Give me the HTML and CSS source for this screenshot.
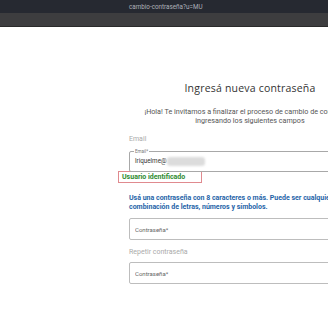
FILE: index.html
```html
<!DOCTYPE html>
<html lang="es">
<head>
    <meta charset="UTF-8">
    <meta name="viewport" content="width=device-width, initial-scale=1.0">
    <title>Cambio de contraseña</title>
    <link rel="stylesheet" href="styles.css">
</head>
<body>

    <!-- Browser chrome -->
    <div class="url-bar">cambio-contraseña?u=MU</div>
    <div class="tab-bar"></div>

    <div class="page">
        <h2 class="title">Ingresá nueva contraseña</h2>
        <p class="intro">¡Hola! Te invitamos a finalizar el proceso de cambio de contraseña<br>ingresando los siguientes campos</p>

        <label class="field-label first">Email</label>
        <div class="email-box">
            <span class="float-label">Email*</span>
            <span class="email-text">lriquelme@</span><span class="blur"></span>
        </div>
        <div class="status">Usuario identificado</div>

        <p class="hint">Usá una contraseña con 8 caracteres o más. Puede ser cualquier<br>combinación de letras, números y símbolos.</p>

        <input type="password" class="pass" placeholder="Contraseña*">

        <label class="field-label">Repetir contraseña</label>
        <input type="password" class="pass second" placeholder="Contraseña*">
    </div>

</body>
</html>
```

FILE: styles.css
```css
/* General */
html, body {
    margin: 0;
    overflow: hidden;
}

body {
    font-family: Roboto, 'Liberation Sans', sans-serif;
    background: white;
    color: #444;
}

/* Browser chrome */
.url-bar {
    height: 13px;
    background: #262931;
    color: #aeb1b8;
    font-size: 6.3px;
    line-height: 14px;
    padding-left: 129px;
}

.tab-bar {
    height: 13px;
    background: #3d3d3f;
    border-bottom: 1px solid #2a2a2a;
}

/* Form column */
.page {
    width: 242px;
    margin-left: 129px;
    padding-top: 53px;
}

.title {
    margin: 0;
    font-family: 'Open Sans', sans-serif;
    font-size: 10.5px;
    font-weight: 500;
    color: #333;
    text-align: center;
    letter-spacing: 0.2px;
    line-height: 16px;
}

.intro {
    margin: 11px -30px 0;
    font-size: 7.2px;
    line-height: 9px;
    color: #555;
    text-align: center;
    white-space: nowrap;
}

.field-label {
    display: block;
    margin-top: 7px;
    font-size: 7px;
    color: #aaa;
    line-height: 10px;
}

.field-label.first {
    margin-top: 9px;
}

/* Email outlined field */
.email-box {
    position: relative;
    box-sizing: border-box;
    height: 21px;
    margin-top: 7px;
    padding: 0 5px;
    border: 1px solid #a8a8a8;
    border-radius: 2px;
    font-size: 6.3px;
    line-height: 19px;
    color: #333;
}

.float-label {
    position: absolute;
    top: -3px;
    left: 4px;
    padding: 0 1px;
    background: white;
    font-size: 4.5px;
    line-height: 5px;
    color: #777;
}

.email-text {
    vertical-align: middle;
}

.blur {
    display: inline-block;
    width: 38px;
    height: 9px;
    background: #dcdcdc;
    border-radius: 3px;
    vertical-align: middle;
    filter: blur(1px);
}

.status {
    width: 76px;
    margin: -1px 0 0 -11px;
    padding: 1px 3px;
    border: 1px solid #e08a8f;
    font-size: 7px;
    font-weight: bold;
    line-height: 8px;
    color: #2e8b30;
}

.hint {
    margin: 11px -60px 0 0;
    font-size: 7px;
    font-weight: bold;
    line-height: 9px;
    color: #1f64a8;
    white-space: nowrap;
}

/* Password inputs */
.pass {
    display: block;
    box-sizing: border-box;
    width: 100%;
    height: 22px;
    margin: 6px 0 0;
    padding: 0 5px;
    border: 1px solid #bdbdbd;
    border-radius: 2px;
    font-family: Roboto, sans-serif;
    font-size: 6px;
    outline: none;
}

.pass::placeholder {
    color: #666;
}

.pass.second {
    margin-top: 5px;
}
```
